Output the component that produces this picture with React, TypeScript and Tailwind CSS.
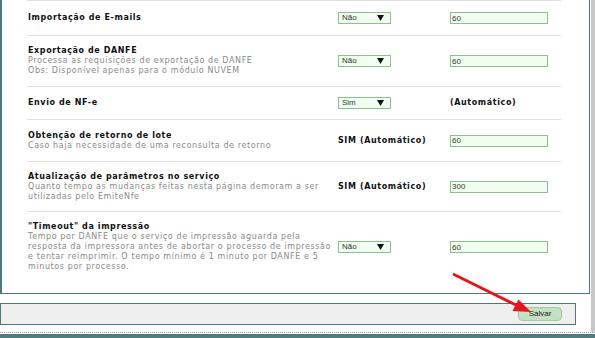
import React from "react";

const Select = ({ value }: { value: string }) => (
  <div className="w-[53px] h-[12px] border border-[#8fbf8f] bg-[#f0fff0] flex items-center justify-between pl-[3px] pr-[6px] font-['Liberation_Sans'] text-[8px] leading-[10px] text-[#333] tracking-normal">
    <span>{value}</span>
    <svg width="7" height="6" viewBox="0 0 7 6">
      <polygon points="0,0 7,0 3.5,6" fill="#111" />
    </svg>
  </div>
);

const Field = ({ value }: { value: string }) => (
  <input
    readOnly
    value={value}
    className="w-[98px] h-[12px] border border-[#8fbf8f] bg-[#f0fff0] pl-[1px] font-['Liberation_Sans'] text-[8px] leading-[10px] text-[#333] tracking-normal outline-none"
  />
);

const Auto = ({ text }: { text: string }) => (
  <span className="font-bold text-[#111] whitespace-nowrap">{text}</span>
);

const App: React.FC = () => {
  return (
    <div className="w-[595px] h-[338px] relative bg-white overflow-hidden flex flex-col font-['DejaVu_Sans'] text-[8px] leading-[10px] tracking-[0.6px]">
      <div className="flex h-[332px]">
        <div className="w-[590px] flex flex-col">
          <div className="h-[294px] border-l-2 border-r border-b border-[#4c7a7a]">
            <div className="ml-[25px] w-[534px] border-t border-[#e0e0e0]">
              <div className="h-[35px] border-b border-[#e0e0e0] grid grid-cols-[310px_112px_1fr] items-center pl-[1px]">
                <div className="font-bold text-[#111]">Importação de E-mails</div>
                <Select value="Não" />
                <Field value="60" />
              </div>

              <div className="h-[51px] border-b border-[#e0e0e0] grid grid-cols-[310px_112px_1fr] items-center pl-[1px]">
                <div className="whitespace-nowrap">
                  <div className="font-bold text-[#111]">Exportação de DANFE</div>
                  <div className="text-[#8a8a8a]">Processa as requisições de exportação de DANFE</div>
                  <div className="text-[#8a8a8a]">Obs: Disponível apenas para o módulo NUVEM</div>
                </div>
                <Select value="Não" />
                <Field value="60" />
              </div>

              <div className="h-[33px] border-b border-[#e0e0e0] grid grid-cols-[310px_112px_1fr] items-center pl-[1px]">
                <div className="font-bold text-[#111]">Envio de NF-e</div>
                <Select value="Sim" />
                <Auto text="(Automático)" />
              </div>

              <div className="h-[42px] border-b border-[#e0e0e0] grid grid-cols-[310px_112px_1fr] items-center pl-[1px]">
                <div className="whitespace-nowrap">
                  <div className="font-bold text-[#111]">Obtenção de retorno de lote</div>
                  <div className="text-[#8a8a8a]">Caso haja necessidade de uma reconsulta de retorno</div>
                </div>
                <Auto text="SIM (Automático)" />
                <Field value="60" />
              </div>

              <div className="h-[50px] border-b border-[#e0e0e0] grid grid-cols-[310px_112px_1fr] items-center pl-[1px]">
                <div className="whitespace-nowrap">
                  <div className="font-bold text-[#111]">Atualização de parâmetros no serviço</div>
                  <div className="text-[#8a8a8a]">
                    Quanto tempo as mudanças feitas nesta página demoram a ser
                    <br />
                    utilizadas pelo EmiteNfe
                  </div>
                </div>
                <Auto text="SIM (Automático)" />
                <Field value="300" />
              </div>

              <div className="py-[10px] grid grid-cols-[310px_112px_1fr] items-center pl-[1px]">
                <div className="whitespace-nowrap">
                  <div className="font-bold text-[#111]">"Timeout" da impressão</div>
                  <div className="text-[#8a8a8a]">
                    Tempo por DANFE que o serviço de impressão aguarda pela
                    <br />
                    resposta da impressora antes de abortar o processo de impressão
                    <br />
                    e tentar reimprimir. O tempo mínimo é 1 minuto por DANFE e 5
                    <br />
                    minutos por processo.
                  </div>
                </div>
                <Select value="Não" />
                <Field value="60" />
              </div>
            </div>
          </div>

          <div className="mt-[9px] w-[576px] h-[22px] border border-[#4c7a7a] bg-[#efefef] flex items-center justify-end pr-[13px]">
            <button className="w-[44px] h-[14px] rounded-[4px] border border-[#a3cca3] bg-[#c3e0c3] font-['Liberation_Sans'] text-[8px] leading-[10px] tracking-normal text-[#222]">
              Salvar
            </button>
          </div>
        </div>
        <div className="w-[1px]" />
        <div className="w-[4px] bg-[#c8c8c8]" />
      </div>
      <div className="h-[2px] border-t border-dotted border-[#9a9a9a]" />
      <div className="flex-1 bg-[#4f7d7d]" />

      <svg
        className="absolute inset-0 pointer-events-none"
        width="595"
        height="338"
        viewBox="0 0 595 338"
      >
        <line x1="453" y1="274" x2="518" y2="306" stroke="#e8141c" strokeWidth="3" />
        <polygon points="531,312 518.5,299.5 512.5,311" fill="#e8141c" />
      </svg>
    </div>
  );
};

export default App;
